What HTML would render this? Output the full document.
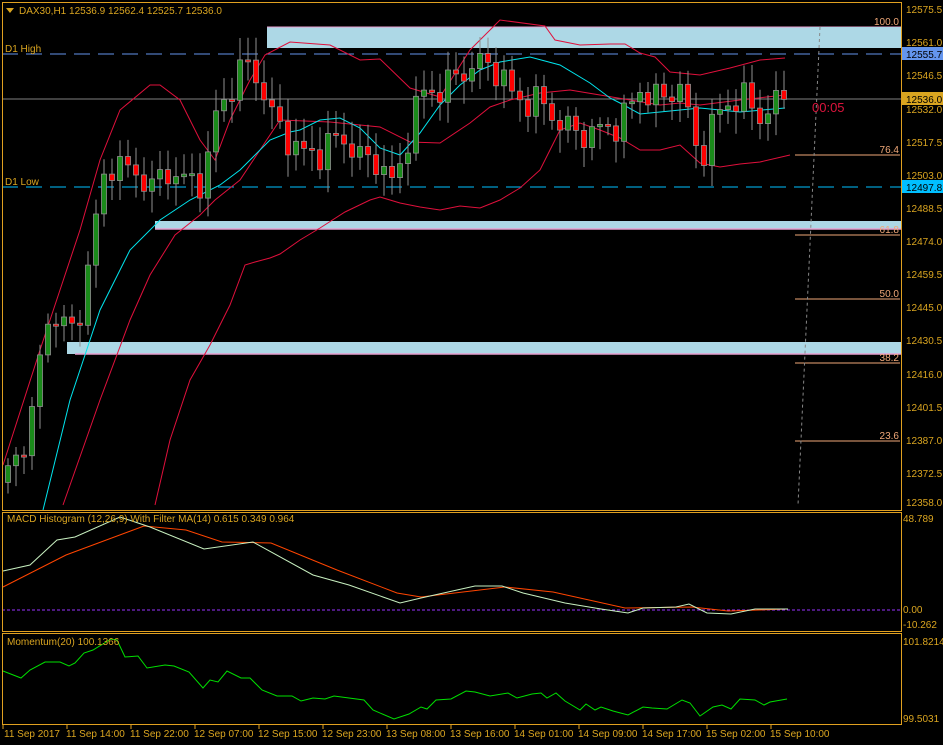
<!DOCTYPE html>
<html><head><meta charset="utf-8"><style>
html,body{margin:0;padding:0;background:#000;width:943px;height:745px;overflow:hidden}
svg{display:block;font-family:"Liberation Sans",sans-serif}
</style></head><body>
<svg id="s" width="943" height="745" viewBox="0 0 943 745" xmlns="http://www.w3.org/2000/svg">
<rect width="943" height="745" fill="#000"/>
<!-- boxes -->
<rect x="267" y="27" width="543" height="21" fill="#add8e6"/>
<rect x="155" y="221" width="655" height="8" fill="#add8e6"/>
<line x1="155" y1="229" x2="810" y2="229" stroke="#e8a0d0" stroke-width="1.5"/>
<rect x="67" y="342" width="834" height="12" fill="#add8e6"/>
<line x1="75" y1="354" x2="901" y2="354" stroke="#e8a0d0" stroke-width="1.5"/>
<line x1="267" y1="27" x2="901" y2="27" stroke="#e8a0d0" stroke-width="1"/>
<rect x="810" y="27" width="91" height="21" fill="#add8e6"/>
<rect x="810" y="221" width="91" height="8" fill="#add8e6"/>
<line x1="810" y1="229" x2="901" y2="229" stroke="#e8a0d0" stroke-width="1.5"/>
<!-- fib lines -->
<g stroke="#f0a878" stroke-width="1">
<line x1="795" y1="155" x2="900" y2="155"/><line x1="795" y1="235" x2="900" y2="235"/>
<line x1="795" y1="299" x2="900" y2="299"/><line x1="795" y1="363" x2="900" y2="363"/>
<line x1="795" y1="441" x2="900" y2="441"/>
</g>
<g fill="#f0a878" font-size="10" text-anchor="end">
<text x="899" y="25">100.0</text><text x="899" y="153">76.4</text><text x="899" y="233">61.8</text>
<text x="899" y="297">50.0</text><text x="899" y="361">38.2</text><text x="899" y="439">23.6</text>
</g>
<!-- horizontal lines -->
<line x1="2" y1="54" x2="901" y2="54" stroke="#6495ed" stroke-dasharray="16,8"/>
<line x1="2" y1="187" x2="901" y2="187" stroke="#00bfff" stroke-dasharray="16,8"/>
<line x1="2" y1="99" x2="901" y2="99" stroke="#808080"/>
<text x="5" y="52" fill="#daa520" font-size="10">D1 High</text>
<text x="5" y="185" fill="#daa520" font-size="10">D1 Low</text>
<line x1="820" y1="27" x2="798" y2="505" stroke="#888" stroke-dasharray="3,3"/>
<g fill="none" stroke-width="1">
<polyline stroke="#e0103c" points="3,465 40,350 60,290 80,230 100,160 120,110 150,85 160,85 180,100 200,140 215,160 230,120 250,80 265,55 290,42 330,45 360,60 380,59 410,88 440,97 470,50 500,20 545,26 555,40 580,45 610,44 625,44 640,53 655,57 670,72 700,75 730,68 760,60 785,58"/>
<polyline stroke="#e0103c" points="63,505 100,400 130,320 150,275 175,235 200,215 215,200 240,180 260,150 280,120 330,122 360,125 380,127 410,142 440,143 470,123 490,107 510,100 540,93 570,90 600,95 630,100 660,105 680,103 700,105 740,100 785,95"/>
<polyline stroke="#00e5ee" points="43,510 70,400 100,310 130,250 160,220 190,200 220,185 240,170 255,155 270,140 290,132 300,130 320,120 340,118 360,128 380,148 400,155 420,133 440,105 460,85 480,70 500,62 530,57 560,65 590,83 610,98 620,103 640,114 660,112 680,110 700,108 740,112 785,108"/>
<polyline stroke="#e0103c" points="155,505 170,440 190,380 210,345 230,305 245,265 255,262 270,258 280,254 300,240 320,228 345,212 370,200 380,197 400,203 420,207 440,210 460,206 480,208 500,200 520,188 540,170 550,150 560,130 580,123 600,130 620,138 640,150 660,150 680,145 700,163 720,167 740,164 760,162 790,155"/>
</g>
<g id="candles"></g>
<text x="812" y="112" fill="#dc143c" font-size="13">00:05</text>
<!-- right axis labels -->
<g fill="#daa520" font-size="10">
<text x="906" y="13">12575.5</text><text x="906" y="46">12561.0</text><text x="906" y="79">12546.5</text>
<text x="906" y="113">12532.0</text><text x="906" y="146">12517.5</text><text x="906" y="179">12503.0</text>
<text x="906" y="212">12488.5</text><text x="906" y="245">12474.0</text><text x="906" y="278">12459.5</text>
<text x="906" y="311">12445.0</text><text x="906" y="344">12430.5</text><text x="906" y="378">12416.0</text>
<text x="906" y="411">12401.5</text><text x="906" y="444">12387.0</text><text x="906" y="477">12372.5</text>
<text x="906" y="506">12358.0</text>
<text x="903" y="522">48.789</text><text x="903" y="613">0.00</text><text x="903" y="628">-10.262</text>
<text x="903" y="645">101.8214</text><text x="903" y="722">99.5031</text>
</g>
<rect x="902" y="47" width="41" height="13" fill="#6495ed"/><text x="906" y="58" fill="#000" font-size="10">12555.7</text>
<rect x="902" y="92" width="41" height="13" fill="#daa520"/><text x="906" y="103" fill="#000" font-size="10">12536.0</text>
<rect x="902" y="180" width="41" height="13" fill="#00bfff"/><text x="906" y="191" fill="#000" font-size="10">12497.8</text>
<!-- MACD -->
<line x1="2" y1="610" x2="901" y2="610" stroke="#9932ff" stroke-dasharray="3,2"/>
<polyline fill="none" stroke="#ff4500" points="3,587 66,555 144,526 186,530 222,542 271,543 337,570 397,593 421,597 505,587 553,592 625,608 692,607 728,611 788,609"/>
<polyline fill="none" stroke="#c8f0c0" points="3,571 30,565 57,540 75,537 120,517 150,527 204,549 253,542 313,575 349,585 400,603 421,598 475,586 502,586 523,593 565,603 601,609 628,613 643,608 676,607 689,604 707,613 731,614 755,609 788,609"/>
<polyline fill="none" stroke="#00e000" points="3,671 21,678 30,670 45,662 60,662 69,666 75,663 84,653 93,650 111,639 117,640 125,657 138,656 147,668 165,665 174,666 189,672 203,688 210,680 218,682 227,671 241,678 250,678 262,690 277,696 292,696 301,701 313,698 325,699 334,696 349,698 364,700 373,710 394,719 409,714 421,707 427,709 436,700 451,699 466,691 475,692 490,696 508,693 517,698 532,694 541,693 547,698 556,693 565,701 580,710 586,704 595,710 601,707 613,711 628,715 643,707 652,708 667,709 682,700 690,703 700,716 713,707 722,705 731,709 740,699 755,700 764,705 770,702 787,699"/>
<text x="7" y="522" fill="#daa520" font-size="10">MACD Histogram (12,26,9) With Filter MA(14) 0.615 0.349 0.964</text>
<text x="7" y="645" fill="#daa520" font-size="10">Momentum(20) 100.1366</text>
<!-- frames -->
<g fill="none" stroke="#e0a020" stroke-width="1">
<rect x="2.5" y="2.5" width="899" height="508"/>
<rect x="2.5" y="512.5" width="899" height="119"/>
<rect x="2.5" y="633.5" width="899" height="91"/>
</g>
<path d="M6 8 L14 8 L10 13 Z" fill="#daa520"/>
<text x="19" y="14" fill="#daa520" font-size="10">DAX30,H1  12536.9 12562.4 12525.7 12536.0</text>
<g stroke="#e0a020"><line x1="3" y1="725" x2="3" y2="729"/><line x1="67" y1="725" x2="67" y2="729"/><line x1="131" y1="725" x2="131" y2="729"/><line x1="195" y1="725" x2="195" y2="729"/><line x1="259" y1="725" x2="259" y2="729"/><line x1="323" y1="725" x2="323" y2="729"/><line x1="387" y1="725" x2="387" y2="729"/><line x1="451" y1="725" x2="451" y2="729"/><line x1="515" y1="725" x2="515" y2="729"/><line x1="579" y1="725" x2="579" y2="729"/><line x1="643" y1="725" x2="643" y2="729"/><line x1="707" y1="725" x2="707" y2="729"/><line x1="771" y1="725" x2="771" y2="729"/></g>
<g fill="#daa520" font-size="10">
<text x="4" y="737">11 Sep 2017</text><text x="66" y="737">11 Sep 14:00</text><text x="130" y="737">11 Sep 22:00</text>
<text x="194" y="737">12 Sep 07:00</text><text x="258" y="737">12 Sep 15:00</text><text x="322" y="737">12 Sep 23:00</text>
<text x="386" y="737">13 Sep 08:00</text><text x="450" y="737">13 Sep 16:00</text><text x="514" y="737">14 Sep 01:00</text>
<text x="578" y="737">14 Sep 09:00</text><text x="642" y="737">14 Sep 17:00</text><text x="706" y="737">15 Sep 02:00</text>
<text x="770" y="737">15 Sep 10:00</text>
</g>
</svg>
<script>
(function(){
var A=[[8,12372],[20,12380],[35,12400],[45,12440],[60,12438],[75,12432],[90,12465],[100,12495],[110,12508],[125,12505],[140,12503],[150,12495],[165,12505],[180,12500],[205,12500],[215,12528],[230,12540],[245,12552],[255,12548],[270,12530],[285,12520],[300,12512],[320,12512],[340,12520],[360,12510],[380,12508],[395,12496],[405,12515],[420,12538],[440,12540],[460,12547],[480,12552],[500,12548],[515,12535],[540,12535],[560,12525],[580,12520],[600,12522],[620,12525],[640,12540],[660,12535],[680,12542],[700,12508],[715,12528],[740,12538],[760,12528],[778,12535],[786,12536]];
function P(x){for(var i=0;i<A.length-1;i++){if(x<=A[i+1][0]){var t=(x-A[i][0])/(A[i+1][0]-A[i][0]);return A[i][1]+t*(A[i+1][1]-A[i][1]);}}return A[A.length-1][1];}
function Y(p){return 9+(12575.5-p)*2.267;}
var g=document.getElementById('candles'),h='',prev=P(0),n=0;
for(var x=8;x<=786;x+=8){n++;var c=P(x)+Math.sin(n*1.7)*5+Math.cos(n*2.9)*3;var o=prev;
if(x>=786){c=12536;o=12536.9;}
var hi=Math.max(o,c)+3+Math.abs(Math.sin(n*3.1))*7,lo=Math.min(o,c)-3-Math.abs(Math.cos(n*1.3))*7;
if(x>=786){hi=12562.4;lo=12525.7;}
var yo=Y(o),yc=Y(c),top=Math.min(yo,yc),bh=Math.max(Math.abs(yo-yc),2);
h+='<line x1="'+x+'" y1="'+Y(hi).toFixed(1)+'" x2="'+x+'" y2="'+Y(lo).toFixed(1)+'" stroke="#909090"/>';
h+='<rect x="'+(x-2.5)+'" y="'+top.toFixed(1)+'" width="5" height="'+bh.toFixed(1)+'" fill="'+(c>=o?'#1a8a1a':'#ff0000')+'" stroke="#909090" stroke-width="0.8"/>';
prev=c;}
g.innerHTML=h;
})();
</script>
</body></html>
